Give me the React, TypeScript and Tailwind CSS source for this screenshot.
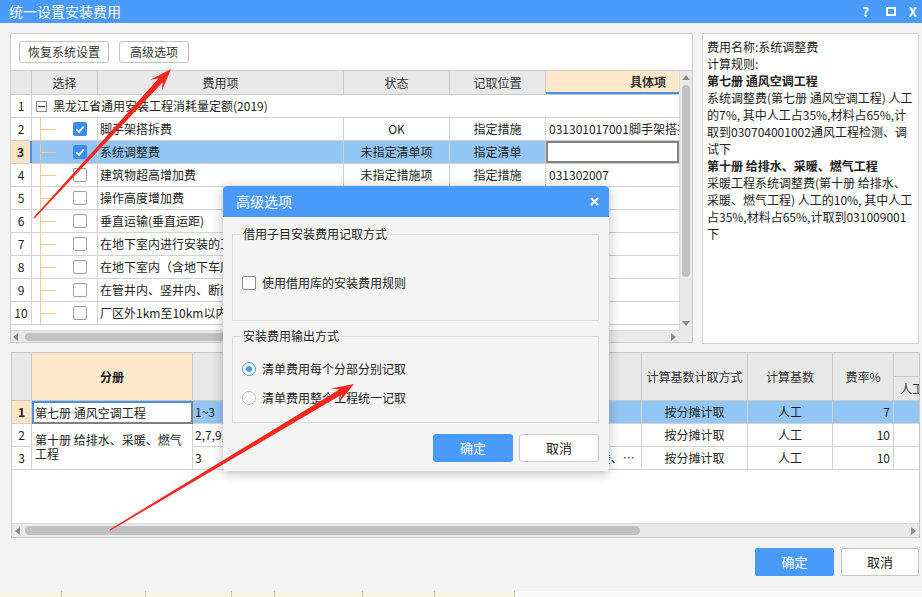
import React from "react";

type Row = {
  n: number;
  name: string;
  checked?: boolean;
  status?: string;
  pos?: string;
  item?: string;
  selected?: boolean;
};

const ROWS: Row[] = [
  { n: 2, name: "脚手架搭拆费", checked: true, status: "OK", pos: "指定措施", item: "031301017001脚手架搭拆费" },
  { n: 3, name: "系统调整费", checked: true, status: "未指定清单项", pos: "指定清单", selected: true },
  { n: 4, name: "建筑物超高增加费", status: "未指定措施项", pos: "指定措施", item: "031302007" },
  { n: 5, name: "操作高度增加费" },
  { n: 6, name: "垂直运输(垂直运距)" },
  { n: 7, name: "在地下室内进行安装的工程" },
  { n: 8, name: "在地下室内（含地下车库）、暗室内" },
  { n: 9, name: "在管井内、竖井内、断面小于4㎡" },
  { n: 10, name: "厂区外1km至10km以内的施工" },
];

const NOTES: [string, boolean][] = [
  ["费用名称:系统调整费", false],
  ["计算规则:", false],
  ["第七册 通风空调工程", true],
  ["系统调整费(第七册 通风空调工程) 人工", false],
  ["的7%, 其中人工占35%,材料占65%,计", false],
  ["取到030704001002通风工程检测、调", false],
  ["试下", false],
  ["第十册 给排水、采暖、燃气工程", true],
  ["采暖工程系统调整费(第十册 给排水、", false],
  ["采暖、燃气工程) 人工的10%, 其中人工", false],
  ["占35%,材料占65%,计取到031009001", false],
  ["下", false],
];

// tapering annotation arrow, tail -> tip
function arrowPoints(tx: number, ty: number, px: number, py: number) {
  const dx = px - tx;
  const dy = py - ty;
  const len = Math.hypot(dx, dy);
  const ux = dx / len, uy = dy / len;
  const nx = -uy, ny = ux;
  const H = 22, W = 8, w0 = 0.7, w1 = 2.8;
  const bx = px - ux * H, by = py - uy * H;
  const kx = px - ux * H * 0.7, ky = py - uy * H * 0.7;
  const pts = [
    [tx + nx * w0, ty + ny * w0],
    [kx + nx * w1, ky + ny * w1],
    [bx + nx * W, by + ny * W],
    [px, py],
    [bx - nx * W, by - ny * W],
    [kx - nx * w1, ky - ny * w1],
    [tx - nx * w0, ty - ny * w0],
  ];
  return pts.map((p) => p.map((v) => v.toFixed(1)).join(",")).join(" ");
}

function Check({ on }: { on: boolean }) {
  return on ? (
    <span className="flex h-[14px] w-[14px] items-center justify-center rounded-[2px] bg-[#3b8df0]">
      <svg viewBox="0 0 14 14" className="h-[14px] w-[14px]">
        <path d="M3.3 7.3 L6 9.9 L10.8 4.5" fill="none" stroke="white" strokeWidth="1.8" />
      </svg>
    </span>
  ) : (
    <span className="h-[14px] w-[14px] rounded-[2px] border border-[#9c9c9c] bg-white" />
  );
}

function TopGrid() {
  return (
    <div className="flex flex-col">
      <div className="flex">
        <div className="flex w-[668px] flex-col">
          {/* header */}
          <div className="flex h-[24px] border-b border-[#c9c9c9] bg-[#e8e8e8] text-[#333]">
            <div className="w-[21px] border-r border-[#c9c9c9]" />
            <div className="flex w-[66px] items-center justify-center border-r border-[#c9c9c9]">选择</div>
            <div className="flex w-[246px] items-center justify-center border-r border-[#c9c9c9]">费用项</div>
            <div className="flex w-[106px] items-center justify-center border-r border-[#c9c9c9]">状态</div>
            <div className="flex w-[96px] items-center justify-center border-r border-[#c9c9c9]">记取位置</div>
            <div className="flex w-[133px] items-center justify-end border-b-2 border-[#4a90e2] bg-[#fde8cb] pr-[13px] font-bold">具体项</div>
          </div>

          {/* row 1: group */}
          <div className="flex h-[23px] border-b border-[#d2d2d2]">
            <div className="flex w-[21px] items-center justify-center border-r border-[#d2d2d2]">1</div>
            <div className="flex items-center pl-[4px]">
              <span className="flex h-[11px] w-[11px] items-center justify-center border border-[#8a8a8a]">
                <span className="h-px w-[7px] bg-[#333]" />
              </span>
              <span className="ml-[6px] whitespace-nowrap">黑龙江省通用安装工程消耗量定额(2019)</span>
            </div>
          </div>

          {ROWS.map((r) => (
            <div
              key={r.n}
              className={`flex h-[23px] border-b border-[#d2d2d2] ${r.selected ? "bg-[#93c6f5]" : "bg-white"}`}
            >
              <div
                className={`flex w-[21px] items-center justify-center ${
                  r.selected ? "border-r-2 border-[#4a90e2] bg-[#fde4c4] font-bold" : "border-r border-[#d2d2d2] bg-white"
                }`}
              >
                {r.n}
              </div>
              <div className="flex w-[66px] items-stretch border-r border-[#d2d2d2]">
                <div className="ml-[8px] flex w-[16px] items-center border-l border-[#f6c68a]">
                  <div className="h-px w-[15px] bg-[#f6c68a]" />
                </div>
                <div className="ml-[17px] flex items-center">
                  <Check on={!!r.checked} />
                </div>
              </div>
              <div className="flex w-[246px] items-center overflow-hidden whitespace-nowrap border-r border-[#d2d2d2] pl-[2px]">
                {r.name}
              </div>
              <div className="flex w-[106px] items-center justify-center border-r border-[#d2d2d2]">{r.status}</div>
              <div className="flex w-[96px] items-center justify-center border-r border-[#d2d2d2]">{r.pos}</div>
              {r.selected ? (
                <div className="w-[133px] border-2 border-[#828282] bg-white" />
              ) : (
                <div className="flex w-[133px] items-center overflow-hidden whitespace-nowrap bg-white pl-[3px]">
                  {r.item}
                </div>
              )}
            </div>
          ))}
          <div className="flex-1 bg-white" />
        </div>

        {/* vertical scrollbar */}
        <div className="flex h-[259px] w-[13px] flex-col items-center border-l border-[#dadada] bg-[#e9e9e9]">
          <svg viewBox="0 0 8 5" className="mt-[4px] h-[5px] w-[8px]">
            <path d="M0 5L4 0L8 5Z" fill="#8a8a8a" />
          </svg>
          <div className="mt-[5px] h-[192px] w-[8px] rounded-full bg-[#c1c1c1]" />
          <div className="flex-1" />
          <svg viewBox="0 0 8 5" className="mb-[4px] h-[5px] w-[8px]">
            <path d="M0 0L8 0L4 5Z" fill="#8a8a8a" />
          </svg>
        </div>
      </div>

      {/* horizontal scrollbar */}
      <div className="flex h-[12px]">
        <div className="flex w-[668px] items-center border-t border-[#dadada] bg-[#e9e9e9]">
          <svg viewBox="0 0 5 8" className="ml-[2px] h-[8px] w-[5px]">
            <path d="M5 0L0 4L5 8Z" fill="#8a8a8a" />
          </svg>
          <div className="ml-[7px] h-[8px] w-[582px] rounded-full bg-[#c1c1c1]" />
          <svg viewBox="0 0 5 8" className="ml-auto mr-[3px] h-[8px] w-[5px]">
            <path d="M0 0L5 4L0 8Z" fill="#8a8a8a" />
          </svg>
        </div>
        <div className="w-[13px] bg-[#e9e9e9]" />
      </div>
    </div>
  );
}

function BottomGrid() {
  const h = "flex items-center justify-center border-r border-b border-[#c9c9c9] bg-[#e8e8e8] text-[#333]";
  const c = "flex items-center overflow-hidden whitespace-nowrap border-r border-b border-[#d2d2d2]";
  const sel = "bg-[#93c6f5]";
  return (
    <div className="flex h-[186px] w-[909px] flex-col border border-[#c6c6c6] bg-white">
      <div className="w-full overflow-hidden">
        <div className="grid w-[942px] grid-cols-[20px_161px_137px_140px_172px_106px_85px_61px_60px] grid-rows-[24px_24px_23px_23px_23px]">
          {/* header */}
          <div className={`${h} row-span-2`} />
          <div className="row-span-2 flex items-center justify-center border-r border-b border-[#c9c9c9] bg-[#fde8cb] font-bold">分册</div>
          <div className={`${h} row-span-2`}>章节范围</div>
          <div className={`${h} row-span-2`}>分部名称</div>
          <div className={`${h} row-span-2`} />
          <div className={`${h} row-span-2`}>计算基数计取方式</div>
          <div className={`${h} row-span-2`}>计算基数</div>
          <div className={`${h} row-span-2`}>费率%</div>
          <div className={h} />
          <div className={`${h} justify-start overflow-hidden whitespace-nowrap pl-[6px]`}>人工</div>

          {/* row 1 */}
          <div className={`${c} justify-center bg-[#fde4c4] font-bold`}>1</div>
          <div className="flex items-center overflow-hidden whitespace-nowrap border-2 border-[#808080] border-l-[#4a90e2] border-t-[#4a90e2] bg-white pl-[1px]">
            第七册 通风空调工程
          </div>
          <div className={`${c} ${sel} pl-[2px]`}>1~3</div>
          <div className={`${c} ${sel}`} />
          <div className={`${c} ${sel}`} />
          <div className={`${c} ${sel} justify-center`}>按分摊计取</div>
          <div className={`${c} ${sel} justify-center`}>人工</div>
          <div className={`${c} ${sel} justify-end pr-[3px]`}>7</div>
          <div className={`${c} ${sel}`} />

          {/* row 2 */}
          <div className={`${c} justify-center`}>2</div>
          <div className="row-span-2 flex items-center border-r border-b border-[#d2d2d2] pl-[3px] leading-[14px]">
            第十册 给排水、采暖、燃气工程
          </div>
          <div className={`${c} pl-[2px]`}>2,7,9,10,11,12,13</div>
          <div className={c} />
          <div className={c} />
          <div className={`${c} justify-center`}>按分摊计取</div>
          <div className={`${c} justify-center`}>人工</div>
          <div className={`${c} justify-end pr-[3px]`}>10</div>
          <div className={c} />

          {/* row 3 */}
          <div className={`${c} justify-center`}>3</div>
          <div className={`${c} pl-[2px]`}>3</div>
          <div className={c} />
          <div className={`${c} pl-[30px]`}>
            <span className="truncate">第十册 给排水、采暖、燃气工程</span>
          </div>
          <div className={`${c} justify-center`}>按分摊计取</div>
          <div className={`${c} justify-center`}>人工</div>
          <div className={`${c} justify-end pr-[3px]`}>10</div>
          <div className={c} />
        </div>
      </div>
      <div className="flex-1" />
      <div className="flex h-[14px] items-center border-t border-[#dadada] bg-[#e9e9e9]">
        <svg viewBox="0 0 5 8" className="ml-[3px] h-[8px] w-[5px]">
          <path d="M5 0L0 4L5 8Z" fill="#8a8a8a" />
        </svg>
        <div className="ml-[5px] h-[9px] w-[615px] rounded-full bg-[#c1c1c1]" />
        <svg viewBox="0 0 5 8" className="ml-auto mr-[3px] h-[8px] w-[5px]">
          <path d="M0 0L5 4L0 8Z" fill="#8a8a8a" />
        </svg>
      </div>
    </div>
  );
}

function Radio({ on }: { on: boolean }) {
  return on ? (
    <span className="flex h-[14px] w-[14px] items-center justify-center rounded-full border border-[#4a9afa] bg-white">
      <span className="h-[6px] w-[6px] rounded-full bg-[#4a9afa]" />
    </span>
  ) : (
    <span className="h-[14px] w-[14px] rounded-full border border-[#c2c2c2] bg-[#f8f8f8]" />
  );
}

function AdvancedDialog() {
  return (
    <div className="absolute left-[223px] top-[186px] z-10 flex h-[285px] w-[386px] flex-col overflow-hidden rounded-[4px] bg-[#f4f4f4] shadow-[0_2px_12px_rgba(0,0,0,0.28)]">
      <div className="flex h-[31px] shrink-0 items-center bg-[#4a9afa] pl-[13px] pr-[10px] text-white">
        <span className="text-[14px]">高级选项</span>
        <svg viewBox="0 0 9 9" className="ml-auto h-[9px] w-[9px]">
          <path d="M1 1L8 8M8 1L1 8" stroke="white" strokeWidth="2.2" />
        </svg>
      </div>
      <div className="flex flex-col pl-[9px] pr-[10px] pt-[10px]">
        <fieldset className="h-[94px] border border-[#dcdcdc]">
          <legend className="ml-[10px] leading-[14px]">借用子目安装费用记取方式</legend>
          <div className="flex items-center gap-[6px] pl-[9px] pt-[35px]">
            <span className="h-[14px] w-[14px] rounded-[2px] border border-[#8c8c8c] bg-white" />
            <span className="leading-[14px]">使用借用库的安装费用规则</span>
          </div>
        </fieldset>
        <fieldset className="mt-[8px] h-[94px] border border-[#dcdcdc]">
          <legend className="ml-[10px] leading-[14px]">安装费用输出方式</legend>
          <div className="flex items-center gap-[6px] pl-[9px] pt-[19px]">
            <Radio on />
            <span className="leading-[14px]">清单费用每个分部分别记取</span>
          </div>
          <div className="mt-[15px] flex items-center gap-[6px] pl-[9px]">
            <Radio on={false} />
            <span className="leading-[14px]">清单费用整个工程统一记取</span>
          </div>
        </fieldset>
        <div className="mt-[11px] flex justify-end gap-[6px]">
          <button className="h-[28px] w-[80px] rounded-[3px] bg-[#4a9afa] text-[13px] text-white">确定</button>
          <button className="h-[28px] w-[80px] rounded-[3px] border border-[#c6c6c6] bg-white text-[13px]">取消</button>
        </div>
      </div>
    </div>
  );
}

export default function App() {
  return (
    <div className="relative h-[597px] w-[922px] overflow-hidden bg-[#f3f3f3] font-['Noto_Sans_CJK_SC','Noto_Sans',sans-serif] text-[12px] text-[#222]">
      <div className="flex h-[591px] flex-col shadow-[0_1px_3px_rgba(0,0,0,0.3)]">
        {/* title bar */}
        <div className="flex h-[23px] shrink-0 items-center bg-[#4a9afa] pl-[9px] pr-[5px] text-white">
          <span className="text-[14px] leading-[23px]">统一设置安装费用</span>
          <span className="ml-auto text-[13px] font-bold">?</span>
          <span className="ml-[17px] h-[9px] w-[10px] border-2 border-white" />
          <span className="ml-[13px] text-[13px] font-bold">X</span>
        </div>

        <div className="mt-[10px] flex pl-[10px]">
          {/* left: fee items */}
          <div className="flex h-[310px] w-[683px] flex-col border border-[#cdcdcd] bg-white">
            <div className="flex h-[37px] shrink-0 items-start gap-[10px] border-b border-[#cfcfcf] pl-[8px] pt-[7px]">
              <button className="h-[22px] w-[90px] rounded-[3px] border border-[#c2c2c2] bg-white text-[#333]">恢复系统设置</button>
              <button className="h-[22px] w-[70px] rounded-[3px] border border-[#c2c2c2] bg-white text-[#333]">高级选项</button>
            </div>
            <TopGrid />
          </div>

          {/* right: rule description */}
          <div className="ml-[9px] h-[311px] w-[217px] border border-[#d3d3d3] bg-white pl-[4px] pt-[4px] leading-[17px]">
            {NOTES.map(([t, b], i) => (
              <div key={i} className={`whitespace-nowrap ${b ? "font-bold" : ""}`}>
                {t}
              </div>
            ))}
          </div>
        </div>

        <div className="ml-[11px] mt-[8px]">
          <BottomGrid />
        </div>

        <div className="mt-[10px] flex justify-end gap-[7px] pr-[3px]">
          <button className="h-[28px] w-[79px] rounded-[2px] bg-[#4a9afa] text-[13px] text-white">确定</button>
          <button className="h-[28px] w-[78px] rounded-[2px] border border-[#c6c6c6] bg-white text-[13px]">取消</button>
        </div>
      </div>

      {/* what lies under the window */}
      <div className="flex h-[6px]">
        <div className="flex w-[515px] bg-[#f7f4e1]">
          <div className="w-[62px] border-r border-[#cfcab2]" />
          <div className="w-[84px] border-r border-[#cfcab2]" />
          <div className="w-[86px] border-r border-[#cfcab2]" />
          <div className="w-[43px] border-r border-[#cfcab2]" />
          <div className="w-[88px] border-r border-[#cfcab2]" />
          <div className="w-[72px] border-r border-[#cfcab2]" />
          <div className="w-[80px] border-r border-[#cfcab2]" />
        </div>
        <div className="flex-1 bg-[#f8f8f8]" />
      </div>

      <AdvancedDialog />

      {/* red annotation arrows */}
      <svg className="pointer-events-none absolute left-0 top-0 z-20 h-[597px] w-[922px]" viewBox="0 0 922 597">
        <polygon points={arrowPoints(34, 218, 171, 69)} fill="#f4271d" />
        <polygon points={arrowPoints(110, 530, 354, 384)} fill="#f4271d" />
      </svg>
    </div>
  );
}
